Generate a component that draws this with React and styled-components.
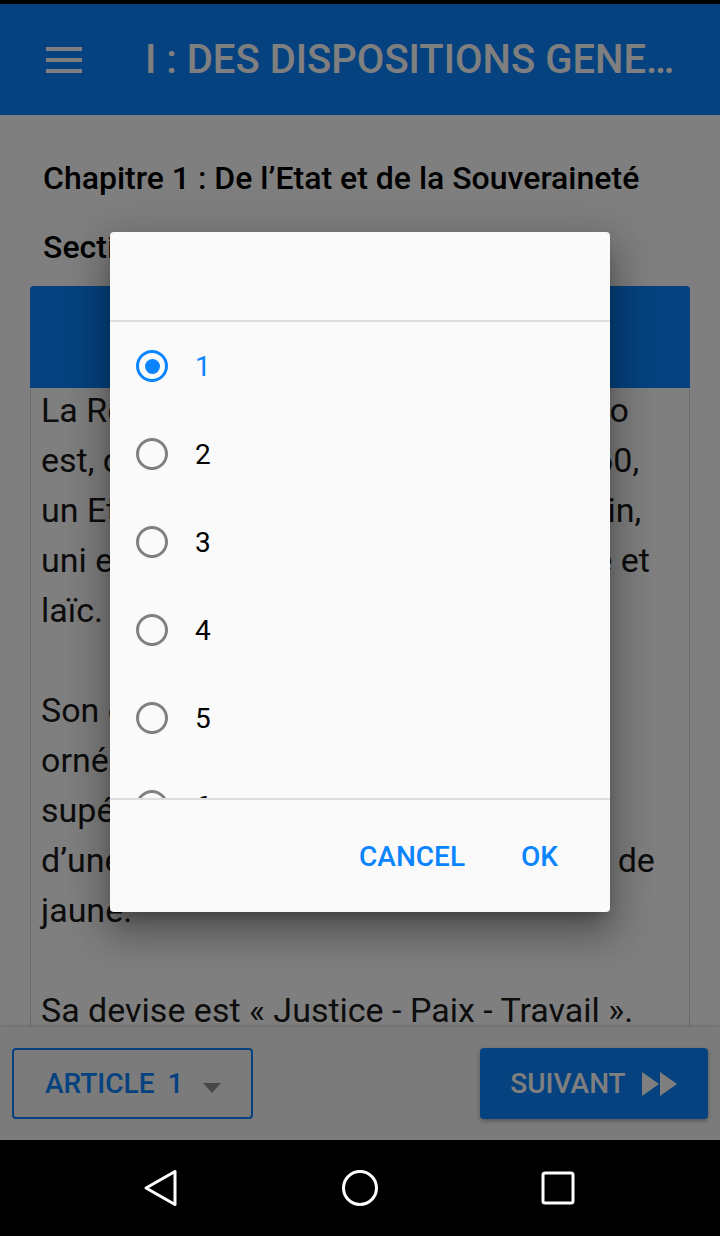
import React from 'react'
import styled, { createGlobalStyle } from 'styled-components'

const primary = '#0a84ff'

const GlobalStyle = createGlobalStyle`
  html, body {
    margin: 0;
    padding: 0;
    background: #000;
  }
  body {
    font-family: Roboto, 'Noto Sans', sans-serif;
  }
  * {
    box-sizing: border-box;
  }
`

const Screen = styled.div`
  width: 720px;
  height: 1236px;
  display: flex;
  flex-direction: column;
  overflow: hidden;
  background: #fff;
`

const AppArea = styled.div`
  position: relative;
  flex: 1;
  display: flex;
  flex-direction: column;
  min-height: 0;
`

const StatusBar = styled.div`
  height: 4px;
  background: #000;
`

const AppBar = styled.header`
  height: 111px;
  background: ${primary};
  display: flex;
  align-items: center;
  padding: 0 36px 0 46px;
  gap: 63px;
  color: #fff;
`

const Title = styled.h1`
  margin: 0;
  flex: 1;
  min-width: 0;
  font-size: 40px;
  font-weight: 500;
  white-space: nowrap;
  overflow: hidden;
  text-overflow: ellipsis;
`

const Content = styled.main`
  flex: 1;
  min-height: 0;
  overflow: hidden;
  padding: 43px 30px 0;
  background: #fff;
`

const Heading = styled.h2`
  margin: 0 0 ${(p) => p.$gap}px;
  padding-left: 13px;
  font-size: 32px;
  line-height: 40px;
  font-weight: 500;
  color: #000;
`

const Card = styled.section`
  border-radius: 4px 4px 0 0;
  border: 1px solid #d4d4d4;
  border-top: none;
  background: #fff;
`

const CardHeader = styled.div`
  height: 102px;
  margin: 0 -1px;
  border-radius: 4px 4px 0 0;
  background: ${primary};
  color: #fff;
  display: flex;
  align-items: center;
  justify-content: center;
  font-size: 30px;
  font-weight: 500;
`

const CardBody = styled.div`
  padding: 0 25px 0 10px;
  margin-top: -3px;
  font-size: 34px;
  line-height: 50px;
  color: #1a1a1a;

  p {
    margin: 0 0 50px;
  }
`

const BottomBar = styled.footer`
  height: 113px;
  background: #f6f6f6;
  box-shadow: 0 -2px 3px rgba(0, 0, 0, 0.12);
  position: relative;
  display: flex;
  align-items: center;
  justify-content: space-between;
  padding: 0 12px;
`

const OutlineButton = styled.button`
  height: 71px;
  width: 241px;
  border: 2px solid ${primary};
  border-radius: 4px;
  background: transparent;
  color: ${primary};
  font-family: inherit;
  font-size: 28px;
  font-weight: 500;
  display: flex;
  align-items: center;
  padding: 0 0 0 31px;
  gap: 20px;
  word-spacing: 6px;
`

const FilledButton = styled.button`
  height: 71px;
  width: 228px;
  border: none;
  border-radius: 4px;
  background: ${primary};
  color: #fff;
  font-family: inherit;
  font-size: 28px;
  font-weight: 500;
  display: flex;
  align-items: center;
  justify-content: center;
  gap: 16px;
  box-shadow: 0 2px 4px rgba(0, 0, 0, 0.3);
`

const Scrim = styled.div`
  position: absolute;
  inset: 4px 0 0 0;
  background: rgba(0, 0, 0, 0.5);
  display: flex;
  align-items: center;
  justify-content: center;
`

const Dialog = styled.div`
  width: 500px;
  height: 680px;
  background: #fafafa;
  border-radius: 4px;
  display: flex;
  flex-direction: column;
  box-shadow: 0 11px 15px -7px rgba(0, 0, 0, 0.3), 0 24px 38px 3px rgba(0, 0, 0, 0.2),
    0 9px 46px 8px rgba(0, 0, 0, 0.16);
`

const DialogTitle = styled.div`
  height: 90px;
  flex-shrink: 0;
  border-bottom: 2px solid #dedede;
`

const OptionList = styled.ul`
  list-style: none;
  margin: 0;
  padding: 0;
  flex: 1;
  overflow: hidden;
  border-bottom: 2px solid #dedede;
`

const Option = styled.li`
  height: 88px;
  display: flex;
  align-items: center;
  padding-left: 26px;
  gap: 27px;
  font-size: 28px;
  color: ${(p) => (p.$selected ? primary : '#000')};
`

const Radio = styled.span`
  width: 32px;
  height: 32px;
  border-radius: 50%;
  border: 3.5px solid ${(p) => (p.$selected ? primary : '#808080')};
  display: flex;
  align-items: center;
  justify-content: center;

  &::after {
    content: '';
    width: 15px;
    height: 15px;
    border-radius: 50%;
    background: ${(p) => (p.$selected ? primary : 'transparent')};
  }
`

const DialogActions = styled.div`
  height: 112px;
  flex-shrink: 0;
  display: flex;
  align-items: center;
  justify-content: flex-end;
  padding-right: 52px;
  gap: 56px;
`

const TextButton = styled.button`
  border: none;
  background: none;
  padding: 0;
  color: ${primary};
  font-family: inherit;
  font-size: 28px;
  font-weight: 500;
`

const NavBar = styled.nav`
  height: 96px;
  background: #000;
  display: flex;
  align-items: center;
  justify-content: center;
  gap: 158px;
`

function Hamburger() {
  return (
    <svg width="36" height="28" viewBox="0 0 36 28" fill="#fff">
      <rect x="0" y="1" width="36" height="4" />
      <rect x="0" y="12" width="36" height="4" />
      <rect x="0" y="23" width="36" height="4" />
    </svg>
  )
}

function FastForward() {
  return (
    <svg width="36" height="24" viewBox="0 0 36 24" fill="#fff">
      <path d="M0 0 L17 12 L0 24 Z" />
      <path d="M18 0 L35 12 L18 24 Z" />
    </svg>
  )
}

function Caret() {
  return (
    <svg width="18" height="10" viewBox="0 0 18 10" fill="#909090" style={{ marginTop: 8 }}>
      <path d="M0 0 L18 0 L9 10 Z" />
    </svg>
  )
}

function NavIcon({ kind }) {
  return (
    <svg width="40" height="40" viewBox="0 0 40 40" fill="none" stroke="#fff" strokeWidth="3" strokeLinejoin="round">
      {kind === 'back' && <path d="M4 20 L33 3.5 L33 36.5 Z" />}
      {kind === 'home' && <circle cx="20" cy="20" r="16.5" />}
      {kind === 'recent' && <rect x="5" y="5" width="30" height="30" rx="2" />}
    </svg>
  )
}

const options = [1, 2, 3, 4, 5, 6]

export default function App() {
  return (
    <>
      <GlobalStyle />
      <Screen>
        <AppArea>
          <StatusBar />
          <AppBar>
            <Hamburger />
            <Title>I : DES DISPOSITIONS GENERALES</Title>
          </AppBar>
          <Content>
            <Heading $gap={29}>Chapitre 1 : De l’Etat et de la Souveraineté</Heading>
            <Heading $gap={19}>Section 1 : De l’Etat</Heading>
            <Card>
              <CardHeader>Article 1</CardHeader>
              <CardBody>
                <p>
                  La République Démocratique du Congo est, dans ses frontières du 30 juin 1960, un Etat de
                  droit, indépendant, souverain, uni et indivisible, social, démocratique et laïc.
                </p>
                <p>
                  Son emblème est le drapeau bleu ciel, orné d’une étoile jaune dans le coin supérieur gauche
                  et traversé en biais d’une bande rouge finement encadrée de jaune.
                </p>
                <p>Sa devise est « Justice - Paix - Travail ».</p>
                <p>Son blason se compose d’une tête de léopard.</p>
              </CardBody>
            </Card>
          </Content>
          <BottomBar>
            <OutlineButton>
              <span>ARTICLE 1</span>
              <Caret />
            </OutlineButton>
            <FilledButton>
              <span>SUIVANT</span>
              <FastForward />
            </FilledButton>
          </BottomBar>
          <Scrim>
            <Dialog>
              <DialogTitle />
              <OptionList>
                {options.map((n) => (
                  <Option key={n} $selected={n === 1}>
                    <Radio $selected={n === 1} />
                    <span>{n}</span>
                  </Option>
                ))}
              </OptionList>
              <DialogActions>
                <TextButton>CANCEL</TextButton>
                <TextButton>OK</TextButton>
              </DialogActions>
            </Dialog>
          </Scrim>
        </AppArea>
        <NavBar>
          <NavIcon kind="back" />
          <NavIcon kind="home" />
          <NavIcon kind="recent" />
        </NavBar>
      </Screen>
    </>
  )
}
